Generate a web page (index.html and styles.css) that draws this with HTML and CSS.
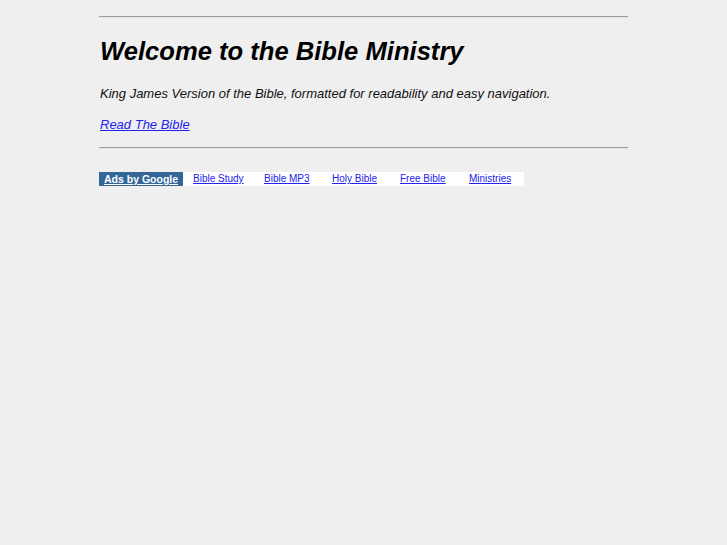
FILE: index.html
```html
<!DOCTYPE html>
<html>
<head>
<meta charset="utf-8">
<title>Welcome to the Bible Ministry</title>
<link rel="stylesheet" href="styles.css">
</head>
<body>
<div class="page">
  <hr class="rule">
  <h1 class="title">Welcome to the Bible Ministry</h1>
  <p class="lead">King James Version of the Bible, formatted for readability and easy navigation.</p>
  <p class="read"><a href="#">Read The Bible</a></p>
  <hr class="rule">
  <div class="ads">
    <a class="ads-label" href="#">Ads by Google</a>
    <div class="ad-links">
      <a class="ad" href="#">Bible Study</a>
      <a class="ad" href="#">Bible MP3</a>
      <a class="ad" href="#">Holy Bible</a>
      <a class="ad" href="#">Free Bible</a>
      <a class="ad" href="#">Ministries</a>
    </div>
  </div>
</div>
</body>
</html>
```

FILE: styles.css
```css
html, body {
  background: #efefef;
}
body {
  margin: 0;
  font-family: "Liberation Sans", Arial, sans-serif;
  color: #000;
}
.page {
  width: 529px;
  margin: 0 auto;
  padding-top: 16px;
}
.rule {
  margin: 0;
  height: 0;
  border: 0;
  border-top: 1px solid #9c9c9c;
  border-bottom: 1px solid #e4e4e4;
}
.title {
  font-size: 25.6px;
  font-style: italic;
  font-weight: bold;
  margin: 18px 0 0 1px;
  line-height: 30px;
}
.lead {
  font-size: 13px;
  font-style: italic;
  margin: 20px 0 0 1px;
  line-height: 15px;
  color: #111;
}
.read {
  font-size: 13px;
  font-style: italic;
  margin: 16px 0 0 1px;
  line-height: 15px;
}
.read a {
  color: #2222ee;
}
.read + .rule {
  margin-top: 15px;
}
.ads {
  display: flex;
  width: 425px;
  height: 14px;
  margin-top: 23px;
  background: #fff;
  line-height: 14px;
  white-space: nowrap;
}
.ads-label {
  background: #336699;
  color: #fff;
  font-weight: bold;
  font-size: 10.5px;
  width: 84px;
  box-sizing: border-box;
  padding-left: 5px;
  text-decoration: underline;
}
.ad-links {
  display: grid;
  grid-template-columns: 71px 68px 68px 69px auto;
  padding-left: 10px;
  font-size: 10px;
}
.ad {
  color: #2222ee;
  justify-self: start;
}
```
